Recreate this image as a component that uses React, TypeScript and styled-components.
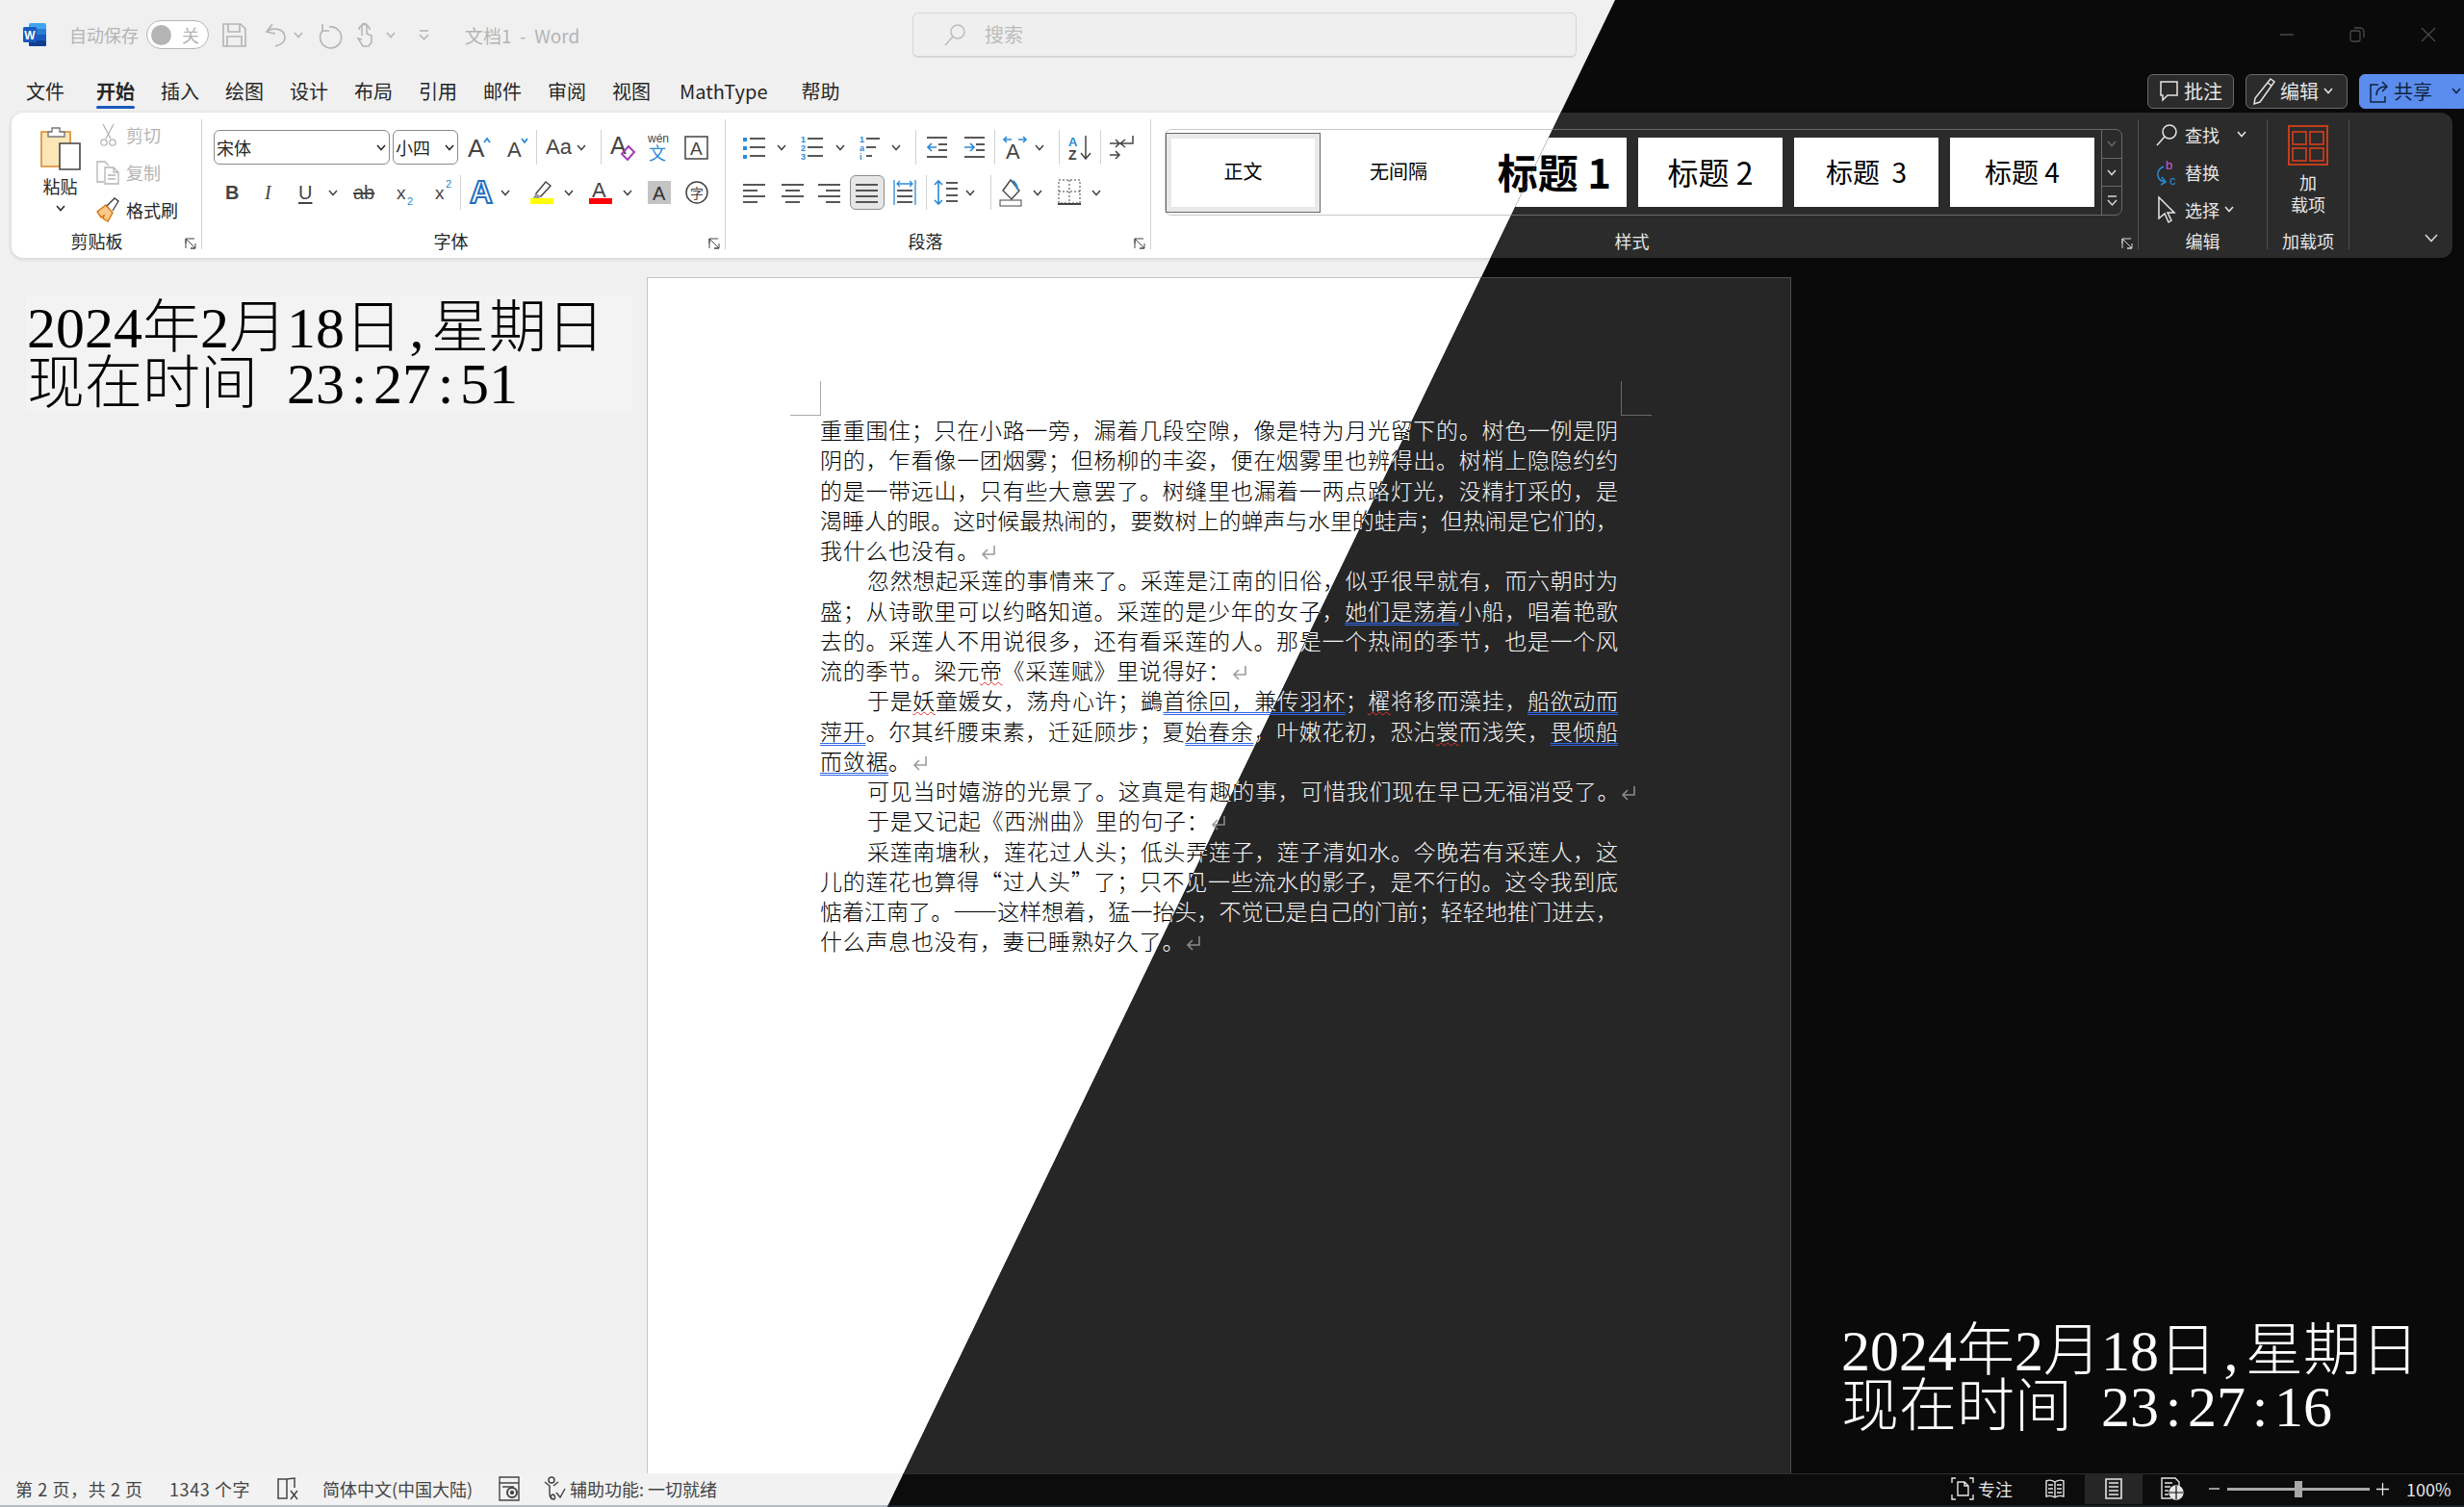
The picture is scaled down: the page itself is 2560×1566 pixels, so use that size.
import React from 'react';
import styled, { createGlobalStyle, ThemeProvider } from 'styled-components';

const UI = '"Noto Sans CJK SC", "Noto Sans", sans-serif';

const light = {
  bg: '#f0f0f0', ribbon: '#ffffff', text: '#262626', muted: '#b4b4b4', sep: '#d2d2d2', icon: '#444444',
  page: '#ffffff', pageBorder: '#c6c6c6', doc: '#000000', crop: '#a8a8a8', mark: '#9c9c9c', status: '#f2f2f2',
  stripe: '#b4bcc4', statusLine: '#f2f2f2', boxLine: '#c8c8c8', clock: '#f3f3f3', clockText: '#000000', shadow: 'rgba(0,0,0,.16)',
  active: '#e6e6e6', field: '#ffffff', fieldLine: '#8a8a8a', win: '#b4b4b4', searchBg: '#efefef', searchLine: '#d6d6d6',
};
const dark = {
  bg: '#0a0a0a', ribbon: '#2b2b2b', text: '#e6e6e6', muted: '#555555', sep: '#505050', icon: '#d6d6d6',
  page: '#262626', pageBorder: '#4c4c4c', doc: '#f6f6f6', crop: '#6a6a6a', mark: '#8a8a8a', status: '#0c0c0c',
  stripe: '#1d2229', statusLine: '#2e2e2e', boxLine: '#6a6a6a', clock: '#0a0a0a', clockText: '#ffffff', shadow: 'rgba(0,0,0,.3)',
  active: '#3a3a3a', field: '#2b2b2b', fieldLine: '#777777', win: '#4a4a4a', searchBg: '#1c1c1c', searchLine: '#3a3a3a',
};

const Global = createGlobalStyle`
  html, body { margin: 0; padding: 0; }
  body { width: 2560px; height: 1566px; overflow: hidden; background: #f0f0f0; }
  #root { width: 2560px; height: 1566px; }
`;

const Stage = styled.div`
  position: relative;
  width: 2560px;
  height: 1566px;
  overflow: hidden;
`;
const DarkLayer = styled.div`
  position: absolute;
  inset: 0;
  clip-path: polygon(1678px 0, 2560px 0, 2560px 1566px, 922px 1566px);
`;
const Window = styled.div`
  position: relative;
  display: flex;
  flex-direction: column;
  width: 2560px;
  height: 1566px;
  background: ${p => p.theme.bg};
  color: ${p => p.theme.text};
  font-family: ${UI};
`;

/* ---------- title bar ---------- */
const TitleBar = styled.header`
  display: flex;
  align-items: center;
  height: 72px;
  padding-left: 24px;
  flex: none;
  color: ${p => p.theme.muted};
  font-size: 18px;
`;
const Slot = styled.div<{ $w: number }>`
  flex: none;
  display: flex;
  align-items: center;
  width: ${p => p.$w}px;
  height: 100%;
  color: inherit;
`;
const ChevSlot = styled(Slot)`
  & > svg { margin-left: -5px; }
`;
const Toggle = styled.div`
  display: flex;
  align-items: center;
  justify-content: space-between;
  width: 65px;
  height: 30px;
  box-sizing: border-box;
  padding: 0 9px 0 4px;
  border: 1px solid ${p => p.theme.muted};
  border-radius: 15px;
  background: ${p => p.theme.ribbon};
  font-size: 18px;
  &::before {
    content: '';
    width: 21px;
    height: 21px;
    border-radius: 50%;
    background: ${p => p.theme.muted};
  }
`;
const DocTitle = styled.div`
  width: 123px;
  font-size: 19px;
  white-space: pre;
`;
const SearchBox = styled.div`
  display: flex;
  align-items: center;
  gap: 20px;
  width: 690px;
  height: 47px;
  box-sizing: border-box;
  margin-left: 342px;
  padding-left: 32px;
  border: 1px solid ${p => p.theme.searchLine};
  border-bottom-width: 2px;
  border-radius: 6px;
  background: ${p => p.theme.searchBg};
  color: #bcbcbc;
  font-size: 20px;
`;
const WinControls = styled.div`
  display: flex;
  align-items: center;
  gap: 58px;
  margin-left: auto;
  padding-right: 29px;
  color: ${p => p.theme.win};
`;

/* ---------- tab row ---------- */
const TabRow = styled.nav`
  display: flex;
  align-items: center;
  flex: none;
  gap: 27px;
  height: 45px;
  padding-left: 27px;
`;
const Tab = styled.span<{ $active?: boolean; $extra?: number; $lead?: number }>`
  position: relative;
  margin-left: ${p => p.$lead ?? 0}px;
  margin-right: ${p => p.$extra ?? 0}px;
  font-size: 20px;
  line-height: 30px;
  white-space: nowrap;
  font-weight: ${p => (p.$active ? 700 : 400)};
  ${p => p.$active && `
    &::after {
      content: '';
      position: absolute;
      left: 0;
      right: 0;
      bottom: -3px;
      height: 3px;
      border-radius: 2px;
      background: #185abd;
    }
  `}
`;
const TopActions = styled.div`
  display: flex;
  align-items: center;
  gap: 12px;
  margin-left: auto;
`;
const TopButton = styled.div<{ $w: number; $pad: number; $primary?: boolean }>`
  display: flex;
  align-items: center;
  gap: 5px;
  width: ${p => p.$w}px;
  height: 36px;
  box-sizing: border-box;
  padding-left: ${p => p.$pad}px;
  border: 1px solid ${p => (p.$primary ? '#5b8def' : p.theme.boxLine)};
  border-radius: ${p => (p.$primary ? '6px 0 0 6px' : '6px')};
  background: ${p => (p.$primary ? '#5b8def' : p.theme.ribbon)};
  color: ${p => (p.$primary ? '#10233f' : p.theme.text)};
  font-size: 20px;
  white-space: nowrap;
`;
const ShareChev = styled.span`
  margin-left: 15px;
  line-height: 0;
`;

/* ---------- ribbon ---------- */
const Ribbon = styled.section`
  position: relative;
  display: flex;
  flex: none;
  height: 151px;
  box-sizing: border-box;
  margin: 0 12px;
  padding: 7px 0 9px;
  border-radius: 12px;
  background: ${p => p.theme.ribbon};
  box-shadow: 0 1px 4px ${p => p.theme.shadow};
`;
const Group = styled.div<{ $w: number; $pad?: number }>`
  position: relative;
  display: flex;
  flex-direction: column;
  flex: none;
  width: ${p => p.$w}px;
  box-sizing: border-box;
  padding: 10px 0 0 ${p => p.$pad ?? 0}px;
  border-right: 1px solid ${p => p.theme.sep};
`;
const GroupLabel = styled.div<{ $shift?: number }>`
  position: absolute;
  left: 0;
  right: ${p => p.$shift ?? 0}px;
  bottom: -2px;
  text-align: center;
  font-size: 18px;
  line-height: 22px;
`;
const Launcher = styled.span`
  position: absolute;
  right: 5px;
  bottom: 0;
  color: ${p => p.theme.icon};
  line-height: 0;
`;
const ToolRow = styled.div<{ $h?: number; $pad?: number }>`
  display: flex;
  align-items: center;
  height: ${p => p.$h ?? 38}px;
  margin-bottom: 9px;
  padding-left: ${p => p.$pad ?? 0}px;
  color: ${p => p.theme.icon};
`;
const Tool = styled.div<{ $w: number }>`
  flex: none;
  display: flex;
  align-items: center;
  width: ${p => p.$w}px;
  height: 100%;
`;
const ChevTool = styled(Tool)`
  & > svg { margin-left: -5px; }
`;
const ToolSep = styled.div<{ $w: number }>`
  flex: none;
  width: ${p => p.$w}px;
  height: 36px;
  &::before {
    content: '';
    display: block;
    width: 1px;
    height: 100%;
    background: ${p => p.theme.sep};
  }
`;
const Field = styled.div<{ $w: number }>`
  flex: none;
  display: flex;
  align-items: center;
  justify-content: space-between;
  width: ${p => p.$w}px;
  height: 36px;
  box-sizing: border-box;
  margin-right: 3px;
  padding: 0 3px 0 2px;
  border: 1px solid ${p => p.theme.fieldLine};
  border-radius: 6px;
  background: ${p => p.theme.field};
  color: ${p => p.theme.text};
  font-size: 18px;
`;
const LetterBtn = styled.span<{ $i?: boolean; $b?: boolean; $u?: boolean; $s?: boolean; $big?: boolean }>`
  font-family: ${p => (p.$i ? '"Liberation Serif"' : '"Liberation Sans"')}, serif;
  font-size: ${p => (p.$big ? 22 : 20)}px;
  font-weight: ${p => (p.$b ? 700 : 400)};
  font-style: ${p => (p.$i ? 'italic' : 'normal')};
  text-decoration: ${p => (p.$u ? 'underline' : p.$s ? 'line-through' : 'none')};
  text-underline-offset: 3px;
  line-height: 1;
`;

/* clipboard */
const ClipboardBody = styled.div`
  display: flex;
  padding-left: 22px;
`;
const PasteCol = styled.div`
  display: flex;
  flex-direction: column;
  align-items: center;
  width: 57px;
  margin: -4px 9px 0 0;
  font-size: 18px;
  line-height: 26px;
  color: ${p => p.theme.text};
  & > svg:first-child { margin-bottom: 4px; }
  & > svg:last-child { margin-top: 7px; }
`;
const ClipCol = styled.div`
  display: flex;
  flex-direction: column;
  margin-top: -14px;
`;
const ClipItem = styled.div<{ $off?: boolean }>`
  display: flex;
  align-items: center;
  gap: 7px;
  height: 39px;
  font-size: 18px;
  white-space: nowrap;
  color: ${p => (p.$off ? p.theme.muted : p.theme.text)};
`;
const ClipIcon = styled.span`
  display: flex;
  justify-content: center;
  width: 24px;
`;

/* styles gallery */
const Gallery = styled.div`
  display: flex;
  align-items: center;
  width: 995px;
  height: 90px;
  box-sizing: border-box;
  margin-left: 14px;
  border: 1px solid ${p => p.theme.boxLine};
  border-radius: 7px;
`;
const StyleCell = styled.div<{ $size: number; $bold?: boolean; $current?: boolean; $end?: boolean }>`
  flex: none;
  display: flex;
  align-items: center;
  justify-content: center;
  box-sizing: border-box;
  width: ${p => (p.$current ? 161 : 150)}px;
  height: ${p => (p.$current ? 83 : 72)}px;
  padding-bottom: 3px;
  margin-right: ${p => (p.$end ? 0 : p.$current ? 6 : 12)}px;
  background: #fff;
  color: #000;
  font-size: ${p => p.$size}px;
  font-weight: ${p => (p.$bold ? 700 : 400)};
  white-space: pre;
  ${p => p.$current && 'border: 1px solid #666; outline: 5px solid #e9e9e9; outline-offset: -6px;'}
`;
const GalleryScroll = styled.div`
  display: flex;
  flex-direction: column;
  align-self: stretch;
  width: 21px;
  margin-left: 7px;
  border-left: 1px solid ${p => p.theme.boxLine};
  color: ${p => p.theme.icon};
`;
const ScrollBtn = styled.div<{ $faded?: boolean }>`
  flex: 1;
  display: flex;
  align-items: center;
  justify-content: center;
  opacity: ${p => (p.$faded ? 0.35 : 1)};
  & + & { border-top: 1px solid ${p => p.theme.boxLine}; }
`;

/* editing + add-ins */
const EditList = styled.div`
  display: flex;
  flex-direction: column;
  margin-top: -14px;
  padding-left: 18px;
`;
const EditItem = styled.div`
  display: flex;
  align-items: center;
  height: 39px;
  font-size: 18px;
  white-space: nowrap;
`;
const EditIcon = styled.span`
  display: flex;
  width: 24px;
  margin-right: 6px;
`;
const EditChev = styled.span<{ $gap: number }>`
  margin-left: ${p => p.$gap}px;
  line-height: 0;
`;
const AddinBody = styled.div`
  display: flex;
  flex-direction: column;
  align-items: center;
  font-size: 18px;
  line-height: 23px;
  text-align: center;
  & > svg { margin: -4px 0 6px; }
`;
const Collapse = styled.span`
  position: absolute;
  right: 15px;
  bottom: 16px;
  line-height: 0;
  color: ${p => p.theme.icon};
`;

/* ---------- document ---------- */
const Body = styled.main`
  flex: 1;
  min-height: 0;
  padding: 20px 0 0 672px;
  overflow: hidden;
`;
const Sheet = styled.article`
  position: relative;
  width: 1189px;
  height: 100%;
  box-sizing: border-box;
  padding: 142px 0 0 179px;
  background: ${p => p.theme.page};
  border: 1px solid ${p => p.theme.pageBorder};
  border-bottom: 0;
`;
const Crop = styled.i<{ $right?: boolean }>`
  position: absolute;
  top: 107px;
  width: 32px;
  height: 36px;
  box-sizing: border-box;
  border-bottom: 1px solid ${p => p.theme.crop};
  ${p => (p.$right
    ? `left: 1011px; border-left: 1px solid ${p.theme.crop};`
    : `left: 148px; border-right: 1px solid ${p.theme.crop};`)}
`;
const Line = styled.div<{ $indent?: boolean; $plain?: boolean }>`
  width: 829px;
  height: 31.25px;
  box-sizing: border-box;
  padding-left: ${p => (p.$indent ? 49 : 0)}px;
  color: ${p => p.theme.doc};
  font-size: 23px;
  font-weight: 300;
  line-height: 31.25px;
  white-space: ${p => (p.$plain ? 'nowrap' : 'normal')};
  text-align: justify;
  text-align-last: ${p => (p.$plain ? 'left' : 'justify')};
  text-justify: inter-character;
  letter-spacing: ${p => (p.$plain ? '0.7px' : '0')};
  overflow: visible;
`;
const Gram = styled.span`
  text-decoration: underline double #2f66e6;
  text-decoration-thickness: 1.4px;
  text-underline-offset: 3px;
  text-decoration-skip-ink: none;
`;
const Spell = styled.span`
  text-decoration: underline wavy #e0342c;
  text-decoration-thickness: 1.4px;
  text-underline-offset: 2px;
  text-decoration-skip-ink: none;
`;
const MarkWrap = styled.span`
  display: inline-block;
  width: 16px;
  margin-left: 1px;
  vertical-align: -3px;
  color: ${p => p.theme.mark};
  line-height: 0;
`;

/* ---------- clock overlay ---------- */
const Clock = styled.div<{ $x: number; $y: number }>`
  position: absolute;
  left: ${p => p.$x}px;
  top: ${p => p.$y}px;
  width: 630px;
  height: 121px;
  box-sizing: border-box;
  padding: 5px 0 0 1px;
  background: ${p => p.theme.clock};
  color: ${p => p.theme.clockText};
  font-family: "Liberation Serif", "Noto Sans CJK SC", serif;
  font-size: 60px;
  line-height: 58px;
  white-space: nowrap;
  font-weight: 300;
`;
const Half = styled.span`
  display: inline-block;
  width: 0.5em;
  text-align: center;
`;

/* ---------- status bar ---------- */
const StatusBar = styled.footer`
  display: flex;
  align-items: center;
  flex: none;
  height: 35px;
  box-sizing: border-box;
  padding: 0 0 2px 16px;
  border-top: 1px solid ${p => p.theme.statusLine};
  border-bottom: 2px solid ${p => p.theme.stripe};
  background: ${p => p.theme.status};
  font-size: 18px;
  color: ${p => p.theme.icon};
  white-space: pre;
`;
const StatusText = styled(Slot)`
  letter-spacing: 0.6px;
`;
const StatusCell = styled.div<{ $w: number; $on?: boolean; $lead?: number }>`
  flex: none;
  display: flex;
  align-items: center;
  width: ${p => p.$w}px;
  height: 32px;
  box-sizing: border-box;
  padding-left: ${p => p.$lead ?? 0}px;
  background: ${p => (p.$on ? '#262626' : 'transparent')};
  color: ${p => p.theme.text};
`;
const FocusText = styled.span`
  margin-left: 4px;
`;
const ZoomTrack = styled.div`
  position: relative;
  flex: none;
  width: 148px;
  height: 3px;
  margin: 0 7px 0 9px;
  background: #a8a8a8;
  &::after {
    content: '';
    position: absolute;
    left: 70px;
    top: -7px;
    width: 8px;
    height: 17px;
    background: #a8a8a8;
  }
`;
const Filler = styled.div`
  flex: 1;
`;

/* ---------- icons ---------- */
const S = styled.svg`
  display: block;
  flex: none;
  overflow: visible;
`;
type IP = { w: number; h: number; children: React.ReactNode };
const Ic = ({ w, h, children }: IP) => (
  <S width={w} height={h} viewBox={`0 0 ${w} ${h}`} fill="none" stroke="currentColor" strokeWidth="1.3">{children}</S>
);
const Chev = () => <Ic w={10} h={7}><path d="M1 1l4 4.5L9 1" strokeWidth="1.5" /></Ic>;
const Bar = ({ x, y, w, c }: { x: number; y: number; w: number; c?: string }) => (
  <path d={`M${x} ${y}h${w}`} stroke={c ?? 'currentColor'} strokeWidth="1.8" />
);
const BLUE = '#2b8ad6';

const WordLogo = () => (
  <S width={24} height={24} viewBox="0 0 24 24">
    <rect x="6" y="0" width="18" height="24" rx="2" fill="#41a5ee" />
    <rect x="6" y="6" width="18" height="6" fill="#2b7cd3" />
    <rect x="6" y="12" width="18" height="6" fill="#185abd" />
    <rect x="6" y="18" width="18" height="6" rx="1" fill="#103f91" />
    <rect x="0" y="4" width="14" height="16" rx="1.5" fill="#185abd" />
    <text x="7" y="16.5" textAnchor="middle" fontSize="12" fontWeight="700" fill="#fff" fontFamily="Liberation Sans">W</text>
  </S>
);
const SaveI = () => <Ic w={25} h={25}><path d="M1 1h18l5 5v18H1zM6 1v8h12V1M5 24V14h15v10" strokeWidth="1.6" /></Ic>;
const UndoI = () => <Ic w={23} h={25}><path d="M8 1L2 9l9 2M2 9c5-5 19-4 19 6 0 5-5 8-10 9" strokeWidth="1.6" /></Ic>;
const RedoI = () => <Ic w={25} h={25}><path d="M5 1v7h7M5 8a11 11 0 1 0 7-4" strokeWidth="1.6" /></Ic>;
const TouchI = () => <Ic w={19} h={26}><path d="M6 14V4a2.5 2.5 0 0 1 5 0v8l5 2v7l-3 4H7l-5-8 4 1M3 8a5.5 5.5 0 1 1 11 0" strokeWidth="1.5" /></Ic>;
const CustomI = () => <Ic w={11} h={11}><path d="M1 1h9M1 5l4.5 5L10 5" strokeWidth="1.5" /></Ic>;
const SearchI = () => (
  <Ic w={22} h={22}><circle cx="14" cy="8" r="7" strokeWidth="1.5" /><path d="M9 13l-8 9" strokeWidth="1.5" /></Ic>
);
const WinMin = () => <Ic w={14} h={2}><path d="M0 1h14" strokeWidth="1.5" /></Ic>;
const WinMax = () => <Ic w={16} h={16}><rect x="1" y="4" width="10" height="11" rx="2" /><path d="M5 1h6a4 4 0 0 1 4 4v6" /></Ic>;
const WinClose = () => <Ic w={16} h={16}><path d="M1 1l14 14M15 1L1 15" /></Ic>;

const PasteI = () => (
  <Ic w={42} h={46}>
    <path d="M1 7h30v36H1z" stroke="#e0872a" strokeWidth="1.6" fill="#fbe6b8" />
    <path d="M12 7V3h8v4h5v5H8V7z" stroke="#777" strokeWidth="1.4" fill="#fff" />
    <path d="M20 19h21v27H20z" fill="#fff" stroke="#444" strokeWidth="1.6" />
  </Ic>
);
const ScissorI = () => (
  <Ic w={17} h={24}><path d="M3 1l8 15M14 1L6 16" /><circle cx="4" cy="20" r="3.2" /><circle cx="13" cy="20" r="3.2" /></Ic>
);
const CopyI = () => (
  <Ic w={25} h={24}><path d="M8 22H1V1h8l4 4M9 7h9l5 5v12H9zM18 7v5h5M12 15h8M12 19h8" /></Ic>
);
const BrushI = () => (
  <Ic w={25} h={26}>
    <path d="M1 15l9-7 7 8-5 9-5-3 1-3-3 2z" fill="#fbc98a" stroke="#d9730d" strokeWidth="1.4" />
    <path d="M11 9l8-8 4 3-6 10" stroke="#444" strokeWidth="1.4" />
  </Ic>
);
const LauncherI = () => (
  <Ic w={12} h={12}><path d="M11 6v5H6M1 6V1h9M1 1l10 10M11 11l-5 0M1 1v10" strokeWidth="1" /></Ic>
);
const GrowA = ({ up }: { up: boolean }) => (
  <Ic w={24} h={24}>
    <text x="0" y="22" fontFamily="Liberation Sans" fontSize={up ? 26 : 22} fill="currentColor" stroke="none">A</text>
    <path d={up ? 'M17 7l3-4 3 4' : 'M15 3l3 4 3-4'} stroke={BLUE} strokeWidth="1.8" />
  </Ic>
);
const ClearI = () => (
  <Ic w={26} h={28}>
    <text x="0" y="21" fontFamily="Liberation Sans" fontSize="25" fill="currentColor" stroke="none">A</text>
    <path d="M19 13l6 6-7 8-6-6z" stroke="#a33fb4" strokeWidth="2" />
  </Ic>
);
const WenI = () => (
  <Ic w={24} h={32}>
    <text x="0" y="11" fontFamily="Liberation Sans" fontSize="12" fill="currentColor" stroke="none">wén</text>
    <text x="1" y="29" fontFamily="Noto Sans CJK SC" fontSize="18" fill={BLUE} stroke="none">文</text>
  </Ic>
);
const BoxA = () => (
  <Ic w={25} h={25}>
    <rect x="1" y="1" width="23" height="23" strokeWidth="1.5" />
    <text x="6" y="20" fontFamily="Liberation Sans" fontSize="19" fill="currentColor" stroke="none">A</text>
  </Ic>
);
const SubI = ({ sup }: { sup: boolean }) => (
  <Ic w={18} h={26}>
    <text x="0" y="20" fontFamily="Liberation Sans" fontSize="19" fontWeight="400" fill="currentColor" stroke="none">x</text>
    <text x="11" y={sup ? 8 : 26} fontFamily="Liberation Sans" fontSize="11" fill={BLUE} stroke="none">2</text>
  </Ic>
);
const EffectA = () => (
  <Ic w={26} h={32}>
    <text x="0" y="27" fontFamily="Liberation Sans" fontSize="33" fontWeight="700" fill="#fff" stroke="#1e6fc2" strokeWidth="2">A</text>
  </Ic>
);
const HighlightI = () => (
  <Ic w={24} h={24}>
    <path d="M6 13L16 1l5 4-10 11-6 1z" strokeWidth="1.4" /><path d="M6 13l5 3-3 3H2z" fill="#999" stroke="none" />
    <rect x="0" y="18" width="24" height="6" fill="#ffff00" stroke="none" />
  </Ic>
);
const ColorA = () => (
  <Ic w={24} h={24}>
    <text x="3" y="17" fontFamily="Liberation Sans" fontSize="22" fill="currentColor" stroke="none">A</text>
    <rect x="0" y="18" width="24" height="6" fill="#ff0000" stroke="none" />
  </Ic>
);
const ShadeA = () => (
  <Ic w={24} h={24}>
    <rect x="0" y="0" width="24" height="24" fill="#c4c4c4" stroke="none" />
    <text x="5" y="20" fontFamily="Liberation Sans" fontSize="20" fill="#333" stroke="none">A</text>
  </Ic>
);
const CircleZi = () => (
  <Ic w={24} h={24}>
    <circle cx="12" cy="12" r="11" strokeWidth="1.5" />
    <text x="5" y="18" fontFamily="Noto Sans CJK SC" fontSize="14" fill="currentColor" stroke="none">字</text>
  </Ic>
);
const ListI = ({ kind }: { kind: 'b' | 'n' | 'm' }) => (
  <Ic w={24} h={24}>
    {kind === 'b' && [2, 11, 20].map(y => <rect key={y} x="0" y={y} width="4" height="4" fill={BLUE} stroke="none" />)}
    {kind !== 'b' && ['1', kind === 'n' ? '2' : 'a', kind === 'n' ? '3' : 'i'].map((t, i) => (
      <text key={t} x="0" y={7 + i * 9} fontFamily="Liberation Sans" fontSize="9" fontWeight="700" fill={BLUE} stroke="none">{t}</text>
    ))}
    {[3, 12, 21].map((y, i) => <Bar key={y} x={7} y={y} w={kind === 'm' ? 14 - i * 4 : 16} />)}
  </Ic>
);
const IndentI = ({ inc }: { inc: boolean }) => (
  <Ic w={23} h={24}>
    <Bar x={1} y={2} w={21} /><Bar x={1} y={22} w={21} />
    <Bar x={13} y={9} w={9} /><Bar x={13} y={15} w={9} />
    <path d={inc ? 'M1 12h9M7 8l4 4-4 4' : 'M11 12H2M6 8l-4 4 4 4'} stroke={BLUE} strokeWidth="1.7" />
  </Ic>
);
const DirI = () => (
  <Ic w={25} h={24}>
    <path d="M1 4h8M4 1L1 4l3 3M24 4h-8M21 1l3 3-3 3" stroke={BLUE} strokeWidth="1.6" />
    <text x="3" y="24" fontFamily="Liberation Sans" fontSize="22" fill="currentColor" stroke="none">A</text>
  </Ic>
);
const SortI = () => (
  <Ic w={26} h={26}>
    <text x="0" y="12" fontFamily="Liberation Sans" fontWeight="700" fontSize="13" fill={BLUE} stroke="none">A</text>
    <text x="0" y="26" fontFamily="Liberation Sans" fontWeight="700" fontSize="14" fill="currentColor" stroke="none">Z</text>
    <path d="M18 1v24M13 19l5 6 5-6" strokeWidth="1.5" />
  </Ic>
);
const CompressI = () => (
  <Ic w={26} h={26}>
    <path d="M25 1v8H13M17 5l-5 4 5 4" strokeWidth="1.5" />
    <path d="M1 9h9M7 5l4 4-4 4M1 21h9M7 17l4 4-4 4" strokeWidth="1.5" />
  </Ic>
);
const AlignI = ({ a }: { a: 'l' | 'c' | 'r' | 'j' }) => {
  const ws = a === 'j' ? [23, 23, 23, 23] : [23, 15, 23, 15];
  return (
    <Ic w={24} h={21}>
      {ws.map((w, i) => (
        <Bar key={i} x={a === 'l' || a === 'j' ? 0 : a === 'c' ? (23 - w) / 2 : 23 - w} y={2 + i * 6} w={w} />
      ))}
    </Ic>
  );
};
const JustifyCell = styled.div`
  flex: none;
  display: flex;
  align-items: center;
  justify-content: center;
  width: 36px;
  height: 36px;
  margin-right: 9px;
  box-sizing: border-box;
  border: 1px solid #8c8c8c;
  border-radius: 6px;
  background: ${p => p.theme.active};
`;
const DistI = () => (
  <Ic w={24} h={28}>
    <path d="M1 1v26M23 1v26" stroke={BLUE} />
    <path d="M4 5h16M7 2L4 5l3 3M17 2l3 3-3 3" stroke={BLUE} />
    <Bar x={4} y={12} w={16} /><Bar x={4} y={18} w={16} /><Bar x={4} y={24} w={16} />
  </Ic>
);
const SpacingI = () => (
  <Ic w={25} h={28}>
    <path d="M5 2v24M1 6l4-4 4 4M1 22l4 4 4-4" stroke={BLUE} strokeWidth="1.6" />
    <Bar x={13} y={4} w={12} /><Bar x={13} y={10} w={12} /><Bar x={13} y={17} w={12} /><Bar x={13} y={23} w={12} />
  </Ic>
);
const ShadingI = () => (
  <Ic w={24} h={30}>
    <path d="M12 2l9 11-8 9-9-9z" strokeWidth="1.4" />
    <path d="M14 3c3 1 5 6 5 9" stroke={BLUE} strokeWidth="2.2" />
    <rect x="1" y="23" width="22" height="6" strokeWidth="1" />
  </Ic>
);
const BorderI = () => (
  <Ic w={24} h={28}>
    <path d="M1 1h22v24H1zM12 1v24M1 13h22" strokeDasharray="2 2" strokeWidth="1" />
    <path d="M0 26h24" strokeWidth="2" />
  </Ic>
);
const ReplaceI = () => (
  <Ic w={24} h={28}>
    <text x="10" y="11" fontFamily="Liberation Sans" fontSize="13" fill="#c65fd0" stroke="none">b</text>
    <text x="14" y="27" fontFamily="Liberation Sans" fontSize="13" fill={BLUE} stroke="none">c</text>
    <path d="M8 8C-1 12 0 23 10 24M6 19l4 5-5 3" stroke={BLUE} strokeWidth="1.5" />
  </Ic>
);
const CursorI = () => <Ic w={24} h={28}><path d="M3 1v22l6-5 4 9 3-2-4-8h7z" strokeWidth="1.5" /></Ic>;
const AddinI = () => (
  <Ic w={42} h={42}>
    <rect x="1" y="1" width="40" height="40" fill="none" stroke="#c43e1c" strokeWidth="2" />
    {[[5, 7], [23, 7], [5, 24], [23, 24]].map(([x, y]) => (
      <rect key={`${x}${y}`} x={x} y={y} width="14" height="13" fill="none" stroke="#c43e1c" strokeWidth="1.8" />
    ))}
  </Ic>
);
const NoteI = () => <Ic w={20} h={22}><path d="M1 1h17v14H8l-5 5v-5H1z" strokeWidth="1.5" /></Ic>;
const PenI = () => <Ic w={24} h={28}><path d="M19 1l4 3L8 25l-6 2 1-6zM16 5l4 3" strokeWidth="1.5" /></Ic>;
const ShareI = () => <Ic w={20} h={24}><path d="M9 5H1v18h15v-6M7 16c0-6 4-9 10-9M13 2l5 5-5 5" strokeWidth="1.5" stroke="#10233f" /></Ic>;
const ReturnI = () => <Ic w={16} h={18}><path d="M14 1v9H2M7 5l-5 5 5 5" strokeWidth="1.6" /></Ic>;
const Mark = () => <MarkWrap><ReturnI /></MarkWrap>;

const ProofI = () => <Ic w={22} h={26}><path d="M1 3h9v20H1zM10 3l8-1v10M14 15l7 9M21 15l-7 9" strokeWidth="1.5" /></Ic>;
const MacroI = () => <Ic w={24} h={26}><path d="M1 1h20v24H1zM1 7h20M4 11h12" strokeWidth="1.4" /><circle cx="14" cy="17" r="5" strokeWidth="2" /><circle cx="14" cy="17" r="1.5" fill="currentColor" /></Ic>;
const AccessI = () => <Ic w={22} h={26}><circle cx="8" cy="4" r="3" strokeWidth="1.5" /><path d="M1 6l5 4v6c0 4 0 7 4 8 2 0 2-4 0-5-3 0-3 3-2 5M15 6l-5 4M13 17l4 5 5-9" strokeWidth="1.5" /></Ic>;
const FocusI = () => <Ic w={24} h={24}><path d="M1 6V1h4M19 1h4v5M23 18v5h-4M5 23H1v-5M7 5h7l4 4v10H7zM14 5v4h4" strokeWidth="1.4" /></Ic>;
const ReadI = () => <Ic w={20} h={20}><path d="M10 3C7 1 3 1 1 2v16c3-1 6-1 9 1 3-2 6-2 9-1V2c-2-1-6-1-9 1zM10 3v16M3 6h5M3 10h5M3 14h5M12 6h5M12 10h5M12 14h5" strokeWidth="1.4" /></Ic>;
const PrintI = () => <Ic w={18} h={22}><path d="M1 1h16v20H1z" strokeWidth="1.6" /><path d="M4 5h10M4 9h10M4 13h10M4 17h10" strokeWidth="1.6" /></Ic>;
const WebI = () => <Ic w={24} h={24}><path d="M11 22H1V1h14l4 4v6M4 6h8M4 10h6M4 14h4M4 18h4" strokeWidth="1.4" /><circle cx="16" cy="16" r="7" fill="currentColor" /><path d="M9 16h14M16 9v14" stroke="#0c0c0c" strokeWidth="1.2" /></Ic>;

/* ---------- page ---------- */
const ClockFace = ({ x, y, sec }: { x: number; y: number; sec: string }) => (
  <Clock $x={x} $y={y}>
    <div>2024年2月18日<Half>,</Half>星期日</div>
    <div>现在时间<Half>&nbsp;</Half>23<Half>:</Half>27<Half>:</Half>{sec}</div>
  </Clock>
);

const Word = ({ isDark }: { isDark: boolean }) => (
  <ThemeProvider theme={isDark ? dark : light}>
    <Window>
      <TitleBar>
        <Slot $w={48}><WordLogo /></Slot>
        <Slot $w={80}>自动保存</Slot>
        <Slot $w={79}><Toggle>关</Toggle></Slot>
        <Slot $w={44}><SaveI /></Slot>
        <Slot $w={35}><UndoI /></Slot>
        <ChevSlot $w={20}><Chev /></ChevSlot>
        <Slot $w={40}><RedoI /></Slot>
        <Slot $w={36}><TouchI /></Slot>
        <ChevSlot $w={34}><Chev /></ChevSlot>
        <ChevSlot $w={43}><CustomI /></ChevSlot>
        <DocTitle>文档1  -  Word</DocTitle>
        <SearchBox><SearchI /><span>搜索</span></SearchBox>
        <WinControls><WinMin /><WinMax /><WinClose /></WinControls>
      </TitleBar>

      <TabRow>
        <Tab $extra={6}>文件</Tab>
        <Tab $active>开始</Tab>
        <Tab>插入</Tab>
        <Tab>绘图</Tab>
        <Tab>设计</Tab>
        <Tab>布局</Tab>
        <Tab>引用</Tab>
        <Tab>邮件</Tab>
        <Tab>审阅</Tab>
        <Tab>视图</Tab>
        <Tab $lead={3} $extra={8}>MathType</Tab>
        <Tab>帮助</Tab>
        <TopActions>
          <TopButton $w={90} $pad={12}><NoteI />批注</TopButton>
          <TopButton $w={106} $pad={6}><PenI />编辑<Chev /></TopButton>
          <TopButton $w={109} $pad={10} $primary><ShareI />共享<ShareChev><Chev /></ShareChev></TopButton>
        </TopActions>
      </TabRow>

      <Ribbon>
        <Group $w={198}>
          <ClipboardBody>
            <PasteCol><PasteI />粘贴<Chev /></PasteCol>
            <ClipCol>
              <ClipItem $off><ClipIcon><ScissorI /></ClipIcon>剪切</ClipItem>
              <ClipItem $off><ClipIcon><CopyI /></ClipIcon>复制</ClipItem>
              <ClipItem><ClipIcon><BrushI /></ClipIcon>格式刷</ClipItem>
            </ClipCol>
          </ClipboardBody>
          <GroupLabel $shift={20}>剪贴板</GroupLabel>
          <Launcher><LauncherI /></Launcher>
        </Group>

        <Group $w={544} $pad={12}>
          <ToolRow>
            <Field $w={183}>宋体<Chev /></Field>
            <Field $w={68}>小四<Chev /></Field>
            <Tool $w={7} />
            <Tool $w={41}><GrowA up /></Tool>
            <Tool $w={30}><GrowA up={false} /></Tool>
            <ToolSep $w={10} />
            <Tool $w={37}><LetterBtn $big>Aa</LetterBtn></Tool>
            <ChevTool $w={20}><Chev /></ChevTool>
            <ToolSep $w={10} />
            <Tool $w={39}><ClearI /></Tool>
            <Tool $w={38}><WenI /></Tool>
            <Tool $w={30}><BoxA /></Tool>
          </ToolRow>
          <ToolRow $pad={12}>
            <Tool $w={41}><LetterBtn $b>B</LetterBtn></Tool>
            <Tool $w={35}><LetterBtn $i>I</LetterBtn></Tool>
            <Tool $w={36}><LetterBtn $u>U</LetterBtn></Tool>
            <ChevTool $w={21}><Chev /></ChevTool>
            <Tool $w={45}><LetterBtn $s>ab</LetterBtn></Tool>
            <Tool $w={40}><SubI sup={false} /></Tool>
            <Tool $w={26}><SubI sup /></Tool>
            <ToolSep $w={10} />
            <Tool $w={37}><EffectA /></Tool>
            <ChevTool $w={26}><Chev /></ChevTool>
            <Tool $w={40}><HighlightI /></Tool>
            <ChevTool $w={21}><Chev /></ChevTool>
            <Tool $w={40}><ColorA /></Tool>
            <ChevTool $w={21}><Chev /></ChevTool>
            <Tool $w={39}><ShadeA /></Tool>
            <Tool $w={30}><CircleZi /></Tool>
          </ToolRow>
          <GroupLabel $shift={26}>字体</GroupLabel>
          <Launcher><LauncherI /></Launcher>
        </Group>

        <Group $w={442} $pad={18}>
          <ToolRow>
            <Tool $w={40}><ListI kind="b" /></Tool>
            <ChevTool $w={20}><Chev /></ChevTool>
            <Tool $w={41}><ListI kind="n" /></Tool>
            <ChevTool $w={20}><Chev /></ChevTool>
            <Tool $w={38}><ListI kind="m" /></Tool>
            <ChevTool $w={20}><Chev /></ChevTool>
            <ToolSep $w={11} />
            <Tool $w={39}><IndentI inc={false} /></Tool>
            <Tool $w={32}><IndentI inc /></Tool>
            <ToolSep $w={9} />
            <Tool $w={38}><DirI /></Tool>
            <ChevTool $w={20}><Chev /></ChevTool>
            <ToolSep $w={10} />
            <Tool $w={33}><SortI /></Tool>
            <ToolSep $w={9} />
            <Tool $w={30}><CompressI /></Tool>
          </ToolRow>
          <ToolRow>
            <Tool $w={40}><AlignI a="l" /></Tool>
            <Tool $w={38}><AlignI a="c" /></Tool>
            <Tool $w={33}><AlignI a="r" /></Tool>
            <JustifyCell><AlignI a="j" /></JustifyCell>
            <Tool $w={34}><DistI /></Tool>
            <ToolSep $w={8} />
            <Tool $w={38}><SpacingI /></Tool>
            <ChevTool $w={21}><Chev /></ChevTool>
            <ToolSep $w={9} />
            <Tool $w={40}><ShadingI /></Tool>
            <ChevTool $w={21}><Chev /></ChevTool>
            <Tool $w={40}><BorderI /></Tool>
            <ChevTool $w={20}><Chev /></ChevTool>
          </ToolRow>
          <GroupLabel $shift={26}>段落</GroupLabel>
          <Launcher><LauncherI /></Launcher>
        </Group>

        <Group $w={1026} $pad={0}>
          <Gallery>
            <StyleCell $current $size={20}>正文</StyleCell>
            <StyleCell $size={20}>无间隔</StyleCell>
            <StyleCell $size={42} $bold>标题 1</StyleCell>
            <StyleCell $size={32}>标题 2</StyleCell>
            <StyleCell $size={28}>标题  3</StyleCell>
            <StyleCell $size={28} $end>标题 4</StyleCell>
            <GalleryScroll>
              <ScrollBtn $faded><Chev /></ScrollBtn>
              <ScrollBtn><Chev /></ScrollBtn>
              <ScrollBtn><CustomI /></ScrollBtn>
            </GalleryScroll>
          </Gallery>
          <GroupLabel $shift={26}>样式</GroupLabel>
          <Launcher><LauncherI /></Launcher>
        </Group>

        <Group $w={134}>
          <EditList>
            <EditItem><EditIcon><SearchI /></EditIcon>查找<EditChev $gap={18}><Chev /></EditChev></EditItem>
            <EditItem><EditIcon><ReplaceI /></EditIcon>替换</EditItem>
            <EditItem><EditIcon><CursorI /></EditIcon>选择<EditChev $gap={5}><Chev /></EditChev></EditItem>
          </EditList>
          <GroupLabel>编辑</GroupLabel>
        </Group>

        <Group $w={85}>
          <AddinBody><AddinI />加<br />载项</AddinBody>
          <GroupLabel>加载项</GroupLabel>
        </Group>
        <Collapse><Ic w={14} h={9}><path d="M1 1l6 6.5L13 1" strokeWidth="1.6" /></Ic></Collapse>
      </Ribbon>

      <Body>
        <Sheet lang="zh-CN">
          <Crop />
          <Crop $right />
          <Line>重重围住；只在小路一旁，漏着几段空隙，像是特为月光留下的。树色一例是阴</Line>
          <Line>阴的，乍看像一团烟雾；但杨柳的丰姿，便在烟雾里也辨得出。树梢上隐隐约约</Line>
          <Line>的是一带远山，只有些大意罢了。树缝里也漏着一两点路灯光，没精打采的，是</Line>
          <Line>渴睡人的眼。这时候最热闹的，要数树上的蝉声与水里的蛙声；但热闹是它们的，</Line>
          <Line $plain>我什么也没有。<Mark /></Line>
          <Line $indent>忽然想起采莲的事情来了。采莲是江南的旧俗，似乎很早就有，而六朝时为</Line>
          <Line>盛；从诗歌里可以约略知道。采莲的是少年的女子，<Gram>她们是荡着</Gram>小船，唱着艳歌</Line>
          <Line>去的。采莲人不用说很多，还有看采莲的人。那是一个热闹的季节，也是一个风</Line>
          <Line $plain>流的季节。梁元<Spell>帝</Spell>《采莲赋》里说得好：<Mark /></Line>
          <Line $indent>于是<Spell>妖</Spell>童媛女，荡舟心许；鷁<Gram>首徐回，兼传羽杯</Gram>；<Spell>櫂</Spell>将移而藻挂，<Gram>船欲动而</Gram></Line>
          <Line><Gram>萍开</Gram>。尔其纤腰束素，迁延顾步；夏<Gram>始春余</Gram>，叶嫩花初，恐沾<Spell>裳</Spell>而浅笑，<Gram>畏倾船</Gram></Line>
          <Line $plain><Gram>而敛裾</Gram>。<Mark /></Line>
          <Line $indent $plain>可见当时嬉游的光景了。这真是有趣的事，可惜我们现在早已无福消受了。<Mark /></Line>
          <Line $indent $plain>于是又记起《西洲曲》里的句子：<Mark /></Line>
          <Line $indent>采莲南塘秋，莲花过人头；低头弄莲子，莲子清如水。今晚若有采莲人，这</Line>
          <Line>儿的莲花也算得“过人头”了；只不见一些流水的影子，是不行的。这令我到底</Line>
          <Line>惦着江南了。——这样想着，猛一抬头，不觉已是自己的门前；轻轻地推门进去，</Line>
          <Line $plain>什么声息也没有，妻已睡熟好久了。<Mark /></Line>
        </Sheet>
      </Body>

      <StatusBar>
        <StatusText $w={160}>第 2 页，共 2 页</StatusText>
        <StatusText $w={112}>1343 个字</StatusText>
        <Slot $w={47}><ProofI /></Slot>
        <Slot $w={183}>简体中文(中国大陆)</Slot>
        <Slot $w={47}><MacroI /></Slot>
        <Slot $w={27}><AccessI /></Slot>
        <span>辅助功能: 一切就绪</span>
        <Filler />
        <StatusCell $w={98}><FocusI /><FocusText>专注</FocusText></StatusCell>
        <StatusCell $w={41}><ReadI /></StatusCell>
        <StatusCell $w={60} $on $lead={21}><PrintI /></StatusCell>
        <StatusCell $w={69} $lead={19}><WebI /></StatusCell>
        <StatusCell $w={10}><Ic w={11} h={2}><path d="M0 1h11" /></Ic></StatusCell>
        <ZoomTrack />
        <StatusCell $w={31}><Ic w={13} h={13}><path d="M0 6.5h13M6.5 0v13" /></Ic></StatusCell>
        <StatusCell $w={60}>100%</StatusCell>
      </StatusBar>

      {isDark ? <ClockFace x={1912} y={1370} sec="16" /> : <ClockFace x={27} y={307} sec="51" />}
    </Window>
  </ThemeProvider>
);

export default function App() {
  return (
    <Stage>
      <Global />
      <Word isDark={false} />
      <DarkLayer><Word isDark /></DarkLayer>
    </Stage>
  );
}
